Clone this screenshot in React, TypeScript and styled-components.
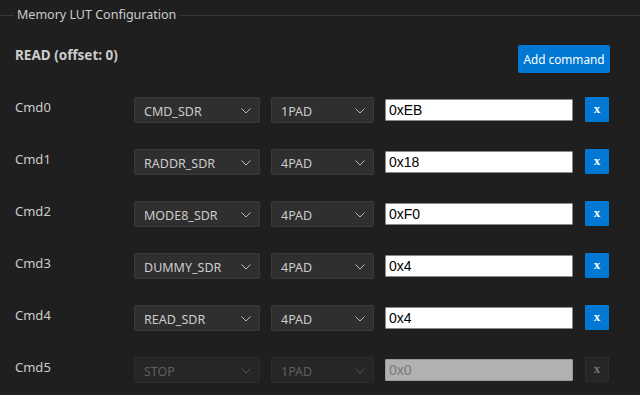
import styled, { createGlobalStyle } from 'styled-components'

type Row = { sel: string; pad: string; value: string; disabled?: boolean }

const ROWS: Row[] = [
  { sel: 'CMD_SDR', pad: '1PAD', value: '0xEB' },
  { sel: 'RADDR_SDR', pad: '4PAD', value: '0x18' },
  { sel: 'MODE8_SDR', pad: '4PAD', value: '0xF0' },
  { sel: 'DUMMY_SDR', pad: '4PAD', value: '0x4' },
  { sel: 'READ_SDR', pad: '4PAD', value: '0x4' },
  { sel: 'STOP', pad: '1PAD', value: '0x0', disabled: true },
]

const GlobalStyles = createGlobalStyle`
  html, body {
    margin: 0;
    background: #1f1f1f;
    color: #cccccc;
    font-family: "Noto Sans", "Open Sans", sans-serif;
    font-size: 12.5px;
  }
`

const Panel = styled.fieldset`
  margin: 6px 0 0 0;
  padding: 0 15px 0 15px;
  border: none;
  border-top: 1px solid #363636;
  min-width: 0;
`

const Legend = styled.legend`
  margin-left: -1px;
  padding: 0 3px;
  line-height: 18px;
  color: #cccccc;
`

const Header = styled.div`
  display: flex;
  justify-content: space-between;
  align-items: flex-start;
  padding-top: 21px;
  padding-right: 15px;
`

const Title = styled.div`
  font-weight: 700;
  font-size: 13.5px;
  line-height: 18px;
  padding-top: 1px;
`

const AddButton = styled.button`
  width: 92px;
  height: 28px;
  border: none;
  border-radius: 2px;
  background: #0078d4;
  color: #ffffff;
  font-family: inherit;
  font-size: 11.8px;
  padding: 0;
`

const List = styled.div`
  display: flex;
  flex-direction: column;
  gap: 26px;
  padding-top: 24px;
`

const CmdRow = styled.div`
  display: grid;
  grid-template-columns: 108px 126px 103px 188px 24px;
  column-gap: 11px;
  align-items: start;
  & > :last-child { margin-left: 1px; }
`

const Label = styled.div`
  line-height: 18px;
  padding-top: 1px;
  font-size: 13px;
`

const Select = styled.div<{ $disabled?: boolean }>`
  height: 26px;
  box-sizing: border-box;
  display: flex;
  align-items: center;
  justify-content: space-between;
  padding: 2px 8px 0 9px;
  background: ${p => (p.$disabled ? '#262626' : '#2f2f2f')};
  border: 1px solid ${p => (p.$disabled ? '#2c2c2c' : '#3a3a3a')};
  border-radius: 2px;
  color: ${p => (p.$disabled ? '#5f5f5f' : '#cccccc')};
  svg { stroke: ${p => (p.$disabled ? '#555555' : '#bbbbbb')}; }
`

const ValueInput = styled.input`
  height: 22px;
  margin-top: 2px;
  box-sizing: border-box;
  width: 100%;
  padding: 0 3px;
  border: 1px solid #8a8a8a;
  border-radius: 1px;
  background: #ffffff;
  color: #000000;
  font-family: "Liberation Sans", Arial, sans-serif;
  font-size: 14px;
  outline: none;
  &:disabled {
    background: #b1b1b1;
    border-color: #9a9a9a;
    color: #7a7a7a;
  }
`

const RemoveButton = styled.button<{ $disabled?: boolean }>`
  width: 24px;
  height: 25px;
  padding: 0 0 2px 0;
  border: 1px solid ${p => (p.$disabled ? '#2e2e2e' : '#0078d4')};
  border-radius: 1px;
  background: ${p => (p.$disabled ? '#262626' : '#0078d4')};
  color: ${p => (p.$disabled ? '#777777' : '#ffffff')};
  font-family: "Liberation Serif", serif;
  font-weight: 700;
  font-size: 13px;
`

function Chevron() {
  return (
    <svg width="10" height="6" viewBox="0 0 10 6" fill="none" strokeWidth="1">
      <path d="M0.5 0.5 L5 5 L9.5 0.5" />
    </svg>
  )
}

export default function App() {
  return (
    <>
      <GlobalStyles />
      <Panel>
        <Legend>Memory LUT Configuration</Legend>
        <Header>
          <Title>READ (offset: 0)</Title>
          <AddButton>Add command</AddButton>
        </Header>
        <List>
          {ROWS.map((r, i) => (
            <CmdRow key={i}>
              <Label>Cmd{i}</Label>
              <Select $disabled={r.disabled}>
                <span>{r.sel}</span>
                <Chevron />
              </Select>
              <Select $disabled={r.disabled}>
                <span>{r.pad}</span>
                <Chevron />
              </Select>
              <ValueInput value={r.value} disabled={r.disabled} readOnly />
              <RemoveButton $disabled={r.disabled} disabled={r.disabled}>x</RemoveButton>
            </CmdRow>
          ))}
        </List>
      </Panel>
    </>
  )
}
